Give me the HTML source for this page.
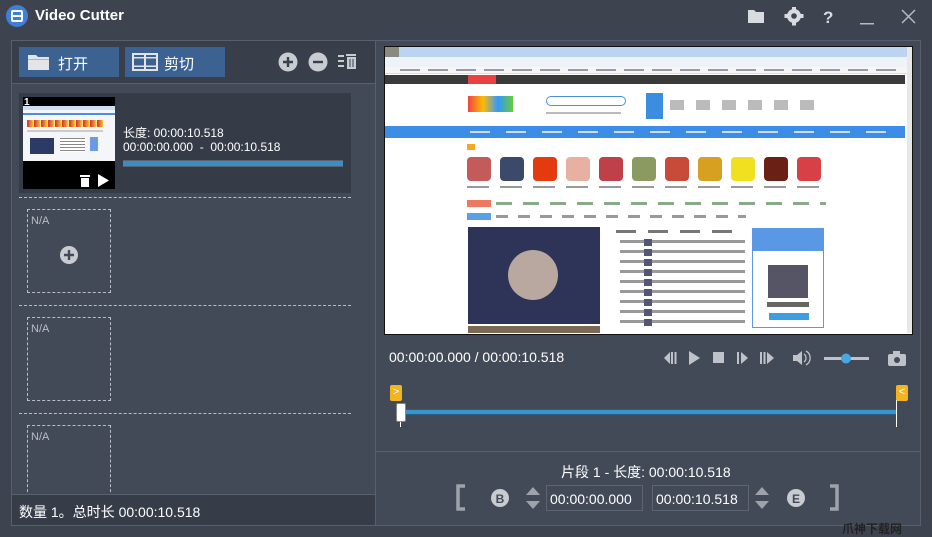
<!DOCTYPE html>
<html><head><meta charset="utf-8"><style>
*{margin:0;padding:0;box-sizing:border-box}
body{width:932px;height:535px;background:#3d434f;font-family:"Liberation Sans","Noto Sans CJK SC",sans-serif;color:#fff;position:relative;overflow:hidden}
.a{position:absolute}
.t{font-size:13px;white-space:nowrap}
.dash{border-top:1px dashed #b9bec6}
.na{border:1px dashed #b9bec6;color:#b9bec6;font-size:11px;padding:5px 0 0 3px}
.btn{background:#3b6290;font-size:15px}
.gl{position:absolute;height:3px;background:#999}
.gi{position:absolute;top:157px;width:24px;height:24px;border-radius:4px}
</style></head><body>
<!-- title bar -->
<div class="a" style="left:6px;top:5px;width:22px;height:22px;border-radius:50%;background:#3f7fd6"></div>
<div class="a" style="left:11px;top:10px;width:12px;height:12px;border:2px solid #fff;border-radius:2px"></div>
<div class="a" style="left:11px;top:15px;width:12px;height:2px;background:#fff"></div>
<div class="a t" style="left:35px;top:7px;font-size:15px;font-weight:bold">Video Cutter</div>
<svg class="a" style="left:746px;top:7px" width="180" height="20">
<path d="M2 3h6l2 2h8v11H2z" fill="#d8dbe0"/>
<g transform="translate(48,9)"><circle r="7" fill="#d8dbe0"/><circle r="2.8" fill="#3d434f"/><g fill="#d8dbe0"><rect x="-2" y="-9.5" width="4" height="4"/><rect x="-2" y="5.5" width="4" height="4"/><rect x="-9.5" y="-2" width="4" height="4"/><rect x="5.5" y="-2" width="4" height="4"/></g></g>
<text x="77" y="16" font-size="17" font-weight="bold" fill="#d8dbe0" font-family="Liberation Sans">?</text>
<rect x="114" y="16" width="14" height="1.5" fill="#b6bac1"/>
<path d="M156 3l13 13M169 3l-13 13" stroke="#b6bac1" stroke-width="1.5"/>
</svg>

<!-- left panel -->
<div class="a" style="left:11px;top:40px;width:365px;height:486px;border:1px solid #59606c;background:#434a57"></div>
<div class="a" style="left:12px;top:41px;width:363px;height:43px;background:#393f4a;border-bottom:1px solid #59606c"></div>
<div class="a btn" style="left:19px;top:47px;width:100px;height:30px"></div>
<svg class="a" style="left:27px;top:53px" width="24" height="18"><path d="M1 2h8l2 2h11v13H1z" fill="#e2e4e7"/><rect x="1" y="6" width="21" height="1" fill="#b0b4ba"/></svg>
<div class="a t" style="left:58px;top:53px;font-size:15px">打开</div>
<div class="a btn" style="left:125px;top:47px;width:100px;height:30px"></div>
<svg class="a" style="left:132px;top:53px" width="26" height="18"><rect x="1" y="1" width="24" height="16" fill="none" stroke="#e2e4e7" stroke-width="2"/><rect x="1" y="4" width="24" height="1.5" fill="#e2e4e7"/><rect x="1" y="12.5" width="24" height="1.5" fill="#e2e4e7"/><rect x="12" y="1" width="2" height="16" fill="#e2e4e7"/></svg>
<div class="a t" style="left:164px;top:53px;font-size:15px">剪切</div>
<svg class="a" style="left:277px;top:51px" width="90" height="22">
<circle cx="11" cy="11" r="9.5" fill="#c8cbd0"/><path d="M11 6v10M6 11h10" stroke="#3a404b" stroke-width="2.4"/>
<circle cx="41" cy="11" r="9.5" fill="#c8cbd0"/><path d="M36 11h10" stroke="#3a404b" stroke-width="2.4"/>
<path d="M61 5h6M61 10h6M61 15h6" stroke="#c8cbd0" stroke-width="2"/>
<rect x="69" y="3" width="10" height="2" fill="#c8cbd0"/><rect x="70" y="6" width="9" height="12" fill="#c8cbd0"/><path d="M73 8v8M76 8v8" stroke="#3a404b" stroke-width="1"/>
</svg>

<!-- item 1 -->
<div class="a" style="left:19px;top:93px;width:332px;height:100px;background:#363c47"></div>
<div class="a" style="left:23px;top:97px;width:92px;height:92px;background:#000"></div>
<div class="a" style="left:23px;top:106px;width:92px;height:55px;background:#f4f6fa"></div>
<div class="a" style="left:23px;top:106px;width:92px;height:4px;background:#cfe0f5"></div>
<div class="a" style="left:23px;top:113px;width:92px;height:2px;background:#4a8fe0"></div>
<div class="a" style="left:27px;top:120px;width:76px;height:7px;background:repeating-linear-gradient(90deg,#c33 0,#e84 4px,#fc0 6px,#fff 7px)"></div>
<div class="a" style="left:27px;top:130px;width:76px;height:2px;background:#ccc"></div>
<div class="a" style="left:30px;top:138px;width:24px;height:16px;background:#2c3a66"></div>
<div class="a" style="left:60px;top:138px;width:25px;height:14px;background:repeating-linear-gradient(180deg,#888 0,#888 1px,#fff 1px,#fff 3px)"></div>
<div class="a" style="left:90px;top:137px;width:8px;height:14px;background:#6a9ae8"></div>
<div class="a t" style="left:24px;top:97px;font-size:10px;font-weight:bold">1</div>
<svg class="a" style="left:78px;top:173px" width="35" height="15"><rect x="2" y="2" width="10" height="2" fill="#fff"/><rect x="3" y="5" width="8" height="9" fill="#fff"/><path d="M20 1v13l11-6.5z" fill="#fff"/></svg>
<div class="a t" style="left:123px;top:124px;font-size:12px">长度: 00:00:10.518</div>
<div class="a t" style="left:123px;top:140px;font-size:12px">00:00:00.000&nbsp; - &nbsp;00:00:10.518</div>
<div class="a" style="left:123px;top:160px;width:220px;height:7px;background:#3b8dc6;border-top:1px solid #5a6270;border-bottom:1px solid #5a6270"></div>

<div class="a dash" style="left:19px;top:197px;width:332px"></div>
<div class="a na" style="left:27px;top:209px;width:84px;height:84px">N/A</div>
<svg class="a" style="left:59px;top:245px" width="20" height="20"><circle cx="10" cy="10" r="9" fill="#c8cbd0"/><path d="M10 5v10M5 10h10" stroke="#434a57" stroke-width="2.4"/></svg>
<div class="a dash" style="left:19px;top:305px;width:332px"></div>
<div class="a na" style="left:27px;top:317px;width:84px;height:84px">N/A</div>
<div class="a dash" style="left:19px;top:413px;width:332px"></div>
<div class="a na" style="left:27px;top:425px;width:84px;height:72px;border-bottom:none">N/A</div>

<div class="a" style="left:12px;top:494px;width:363px;height:31px;background:#373d48;border-top:1px solid #59606c"></div>
<div class="a t" style="left:19px;top:502px;font-size:14px">数量 1。总时长 00:00:10.518</div>

<!-- right panel -->
<div class="a" style="left:376px;top:40px;width:545px;height:486px;border:1px solid #59606c;border-left:none;background:#434a57"></div>
<div class="a" style="left:384px;top:46px;width:529px;height:289px;background:#fff;border:1px solid #111"></div>
<div class="a" style="left:385px;top:47px;width:527px;height:10px;background:#bcd4f0"></div>
<div class="a" style="left:385px;top:47px;width:14px;height:26px;background:#8a8a80;border-radius:0 0 7px 0"></div>
<div class="a" style="left:385px;top:57px;width:527px;height:10px;background:#eef3f9"></div>
<div class="a" style="left:385px;top:67px;width:527px;height:7px;background:#f6f6f6;border-bottom:1px solid #ddd"></div>
<div class="gl" style="left:400px;top:69px;width:500px;height:2px;background:repeating-linear-gradient(90deg,#99a 0,#99a 20px,transparent 20px,transparent 28px)"></div>
<div class="a" style="left:385px;top:75px;width:520px;height:9px;background:#3a3a3a"></div>
<div class="a" style="left:468px;top:75px;width:28px;height:9px;background:#e9413f"></div>
<div class="a" style="left:468px;top:96px;width:45px;height:16px;background:linear-gradient(90deg,#e44,#fb0,#39f,#6c3)"></div>
<div class="a" style="left:546px;top:96px;width:80px;height:10px;border:1px solid #4a90e2;border-radius:6px"></div>
<div class="gl" style="left:546px;top:112px;width:75px;height:2px;background:#bbb"></div>
<div class="a" style="left:646px;top:93px;width:17px;height:26px;background:#3b8de0"></div>
<div class="gl" style="left:670px;top:100px;width:155px;height:10px;background:repeating-linear-gradient(90deg,#bbb 0,#bbb 14px,transparent 14px,transparent 26px)"></div>
<div class="a" style="left:385px;top:126px;width:520px;height:12px;background:#3b8de8"></div>
<div class="gl" style="left:470px;top:131px;width:430px;height:2px;background:repeating-linear-gradient(90deg,#cde 0,#cde 20px,transparent 20px,transparent 36px)"></div>
<div class="a" style="left:467px;top:144px;width:8px;height:6px;background:#f5a623"></div>
<div class="gi" style="left:467px;background:#c45a5a"></div>
<div class="gi" style="left:500px;background:#3b4a6a"></div>
<div class="gi" style="left:533px;background:#e33a10"></div>
<div class="gi" style="left:566px;background:#e8b0a0"></div>
<div class="gi" style="left:599px;background:#c04048"></div>
<div class="gi" style="left:632px;background:#8a9a60"></div>
<div class="gi" style="left:665px;background:#c84a38"></div>
<div class="gi" style="left:698px;background:#d8a020"></div>
<div class="gi" style="left:731px;background:#f0e020"></div>
<div class="gi" style="left:764px;background:#6a2015"></div>
<div class="gi" style="left:797px;background:#d84048"></div>
<div class="gl" style="left:467px;top:186px;width:360px;height:2px;background:repeating-linear-gradient(90deg,#999 0,#999 22px,transparent 22px,transparent 33px)"></div>
<div class="a" style="left:467px;top:200px;width:24px;height:7px;background:#f07860"></div>
<div class="gl" style="left:496px;top:202px;width:330px;height:3px;background:repeating-linear-gradient(90deg,#8a8 0,#8a8 16px,transparent 16px,transparent 27px)"></div>
<div class="a" style="left:467px;top:213px;width:24px;height:7px;background:#5aa0e6"></div>
<div class="gl" style="left:496px;top:215px;width:250px;height:3px;background:repeating-linear-gradient(90deg,#999 0,#999 12px,transparent 12px,transparent 22px)"></div>
<div class="a" style="left:468px;top:227px;width:132px;height:97px;background:#2e3457"></div>
<div class="a" style="left:508px;top:250px;width:50px;height:50px;border-radius:50%;background:#b8a8a0"></div>
<div class="a" style="left:468px;top:326px;width:132px;height:7px;background:#7a6a55"></div>
<div class="gl" style="left:616px;top:230px;width:125px;height:3px;background:repeating-linear-gradient(90deg,#777 0,#777 20px,transparent 20px,transparent 32px)"></div>
<div class="a" style="left:620px;top:240px;width:125px;height:90px;background:repeating-linear-gradient(180deg,#999 0,#999 3px,transparent 3px,transparent 10px)"></div>
<div class="a" style="left:644px;top:239px;width:8px;height:90px;background:repeating-linear-gradient(180deg,#557 0,#557 7px,transparent 7px,transparent 10px)"></div>
<div class="a" style="left:752px;top:228px;width:72px;height:100px;border:1px solid #5a98e6;background:#fff"></div>
<div class="a" style="left:753px;top:229px;width:70px;height:22px;background:#5a98e6"></div>
<div class="a" style="left:768px;top:265px;width:40px;height:33px;background:#556"></div>
<div class="a" style="left:767px;top:302px;width:42px;height:5px;background:#666"></div>
<div class="a" style="left:769px;top:313px;width:40px;height:7px;background:#3ca0e0"></div>
<div class="a" style="left:907px;top:47px;width:5px;height:286px;background:#e8e8e8"></div>

<div class="a t" style="left:389px;top:349px;font-size:14px">00:00:00.000 / 00:00:10.518</div>
<svg class="a" style="left:662px;top:348px" width="250" height="20">
<g fill="#bfc3c9">
<path d="M2 10l6-6v12z"/><rect x="9" y="4" width="2" height="12"/><rect x="12.5" y="4" width="2" height="12"/>
<path d="M27 3v14l11-7z"/>
<rect x="51" y="4" width="11" height="11"/>
<rect x="75" y="4" width="2" height="12"/><path d="M79 4v12l7-6z"/>
<rect x="98" y="4" width="2" height="12"/><rect x="101.5" y="4" width="2" height="12"/><path d="M105 4v12l7-6z"/>
<path d="M131 7h4l5-4v14l-5-4h-4z"/>
<rect x="162" y="9" width="45" height="3"/>
<rect x="226" y="6" width="18" height="12" rx="2"/><rect x="231" y="3" width="7" height="4"/>
</g>
<path d="M142 6a5 5 0 0 1 0 8M144 3a8 8 0 0 1 0 14" stroke="#bfc3c9" stroke-width="1.3" fill="none"/>
<circle cx="184" cy="10.5" r="5" fill="#4aa6e0"/>
<circle cx="235" cy="12" r="3" fill="#434a57"/>
</svg>

<!-- timeline -->
<div class="a" style="left:390px;top:385px;width:12px;height:16px;background:#f3b51f;border-radius:2px;color:#fff;font-size:11px;text-align:center;line-height:15px">&gt;</div>
<div class="a" style="left:896px;top:385px;width:12px;height:16px;background:#f3b51f;border-radius:2px;color:#fff;font-size:11px;text-align:center;line-height:15px">&lt;</div>
<div class="a" style="left:400px;top:409px;width:497px;height:6px;background:#3b93cc;border-top:1px solid #2a5e86;border-bottom:1px solid #2a5e86"></div>
<div class="a" style="left:396px;top:403px;width:10px;height:19px;background:#fff;border:1px solid #888;border-radius:2px"></div>
<div class="a" style="left:400px;top:422px;width:1px;height:5px;background:#fff"></div>
<div class="a" style="left:896px;top:400px;width:1px;height:27px;background:#fff"></div>

<div class="a" style="left:376px;top:451px;width:544px;height:1px;background:#59606c"></div>
<div class="a t" style="left:561px;top:462px;font-size:14px">片段 1 - 长度: 00:00:10.518</div>
<svg class="a" style="left:452px;top:483px" width="395" height="30">
<path d="M13 3H6v23h7" stroke="#9ea3ab" stroke-width="3.5" fill="none"/>
<path d="M378 3h7v23h-7" stroke="#9ea3ab" stroke-width="3.5" fill="none"/>
<circle cx="48" cy="15" r="9" fill="#c8cbd0"/><text x="48" y="20" font-size="12" font-weight="bold" text-anchor="middle" fill="#434a57" font-family="Liberation Sans">B</text>
<circle cx="344" cy="15" r="9" fill="#c8cbd0"/><text x="344" y="20" font-size="12" font-weight="bold" text-anchor="middle" fill="#434a57" font-family="Liberation Sans">E</text>
<path d="M74 12l7-8 7 8zM74 18l7 8 7-8z" fill="#9ea3ab"/>
<path d="M303 12l7-8 7 8zM303 18l7 8 7-8z" fill="#9ea3ab"/>
</svg>
<div class="a t" style="left:546px;top:485px;width:97px;height:26px;border:1px solid #5e6571;font-size:14px;padding:5px 0 0 3px">00:00:00.000</div>
<div class="a t" style="left:652px;top:485px;width:97px;height:26px;border:1px solid #5e6571;font-size:14px;padding:5px 0 0 3px">00:00:10.518</div>
<div class="a" style="left:376px;top:525px;width:545px;height:1px;background:#59606c"></div>
<div class="a t" style="left:842px;top:520px;font-size:12px;color:#222;font-weight:bold">爪神下载网</div>
</body></html>
